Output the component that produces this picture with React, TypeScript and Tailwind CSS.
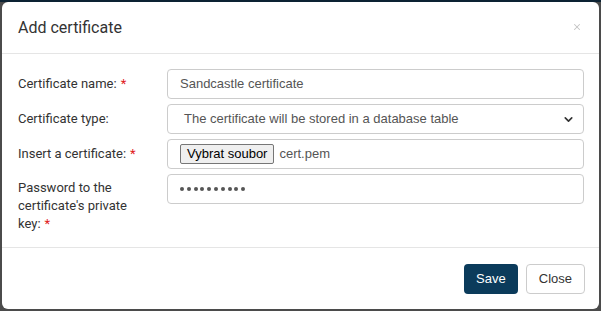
import { ChevronDown, X } from 'lucide-react'

const label = 'text-[13px] leading-[18px] text-[#333] font-[Roboto,sans-serif]'
const field =
  'h-[30px] flex items-center rounded-[4px] border border-[#ccc] bg-white px-3 text-[13px] text-[#555] font-["Liberation_Sans",Arial,sans-serif]'

function Req() {
  return <span className="ml-1 text-[#e0201b]">*</span>
}

export default function App() {
  return (
    <div className="h-[311px] w-[601px] overflow-hidden border-t-2 border-[#0c2233] bg-[#4b4b4b] px-[2px] pb-[2px]">
      <div className="flex h-[307px] flex-col rounded-[6px] bg-white">
        <div className="flex h-[52px] items-center justify-between border-b border-[#e5e5e5] pl-[16px] pr-[17px]">
          <h4 className="font-[Roboto,sans-serif] text-[16px] text-[#333]">Add certificate</h4>
          <X className="mb-[2px] h-[10px] w-[10px] text-[#c4c4c4]" strokeWidth={2.5} />
        </div>

        <div className="grid flex-1 grid-cols-[149px_1fr] content-start gap-x-0 gap-y-[5px] pl-[16px] pr-[15px] pt-[15px]">
          <div className={`${label} flex h-[30px] items-center`}>
            Certificate name:<Req />
          </div>
          <div className={field}>Sandcastle certificate</div>

          <div className={`${label} flex h-[30px] items-center`}>Certificate type:</div>
          <div className={`${field} justify-between pl-[16px] pr-[8px]`}>
            <span>The certificate will be stored in a database table</span>
            <ChevronDown className="h-[13px] w-[13px] text-[#333]" strokeWidth={3} />
          </div>

          <div className={`${label} flex h-[30px] items-center`}>
            Insert a certificate:<Req />
          </div>
          <div className={`${field} gap-[5px] text-[#333]`}>
            <span className="rounded-[2px] border border-[#767676] bg-[#efefef] px-[6px] leading-[18px] text-black">
              Vybrat soubor
            </span>
            <span>cert.pem</span>
          </div>

          <div className={`${label} pr-[14px] pt-[5px]`}>
            Password to the certificate&apos;s private <span className="whitespace-nowrap">key:<Req /></span>
          </div>
          <div className={`${field} gap-[2.8px]`}>
            {Array.from({ length: 10 }).map((_, i) => (
              <span key={i} className="h-[4px] w-[4px] rounded-full bg-[#555]" />
            ))}
          </div>
        </div>

        <div className="flex h-[62px] items-center justify-end gap-[8px] border-t border-[#e5e5e5] pr-[14px]">
          <button className="h-[30px] rounded-[4px] bg-[#0b3b5b] px-[12px] font-['Liberation_Sans',Arial,sans-serif] text-[13px] text-white">
            Save
          </button>
          <button className="h-[30px] rounded-[4px] border border-[#ccc] bg-white px-[12px] font-['Liberation_Sans',Arial,sans-serif] text-[13px] text-[#333]">
            Close
          </button>
        </div>
      </div>
    </div>
  )
}
